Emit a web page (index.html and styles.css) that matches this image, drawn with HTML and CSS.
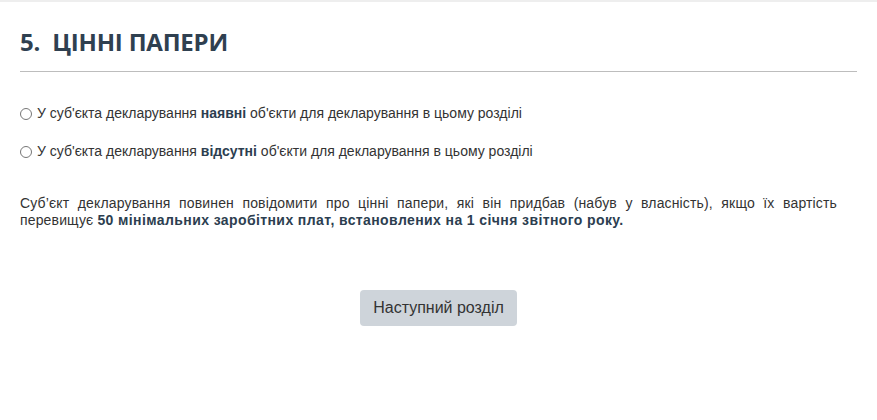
FILE: index.html
```html
<!DOCTYPE html>
<html lang="uk">
<head>
<meta charset="utf-8">
<link rel="stylesheet" href="styles.css">
</head>
<body>
<div class="page">
  <h2 class="title">5.&nbsp; ЦІННІ ПАПЕРИ</h2>
  <hr class="rule">
  <div class="options">
    <label class="option"><input type="radio" name="avail"> <span>У суб'єкта декларування <b>наявні</b> об'єкти для декларування в цьому розділі</span></label>
    <label class="option"><input type="radio" name="avail"> <span>У суб'єкта декларування <b>відсутні</b> об'єкти для декларування в цьому розділі</span></label>
  </div>
  <p class="note">Суб’єкт декларування повинен повідомити про цінні папери, які він придбав (набув у власність), якщо їх вартість перевищує <b>50 мінімальних заробітних плат, встановлених на 1 січня звітного року.</b></p>
  <div class="actions">
    <button class="next" type="button">Наступний розділ</button>
  </div>
</div>
</body>
</html>
```
FILE: styles.css
```css
html, body {
  margin: 0;
  padding: 0;
  background: #fff;
}
body {
  border-top: 2px solid #eeeeee;
  font-family: "Liberation Sans", Arial, sans-serif;
  color: #333;
}
.page {
  padding: 0 20px;
}
.title {
  margin: 0;
  padding-top: 26px;
  font-family: "Open Sans", sans-serif;
  font-weight: 700;
  font-size: 24px;
  line-height: 28px;
  color: #2f4050;
  letter-spacing: -0.2px;
}
.rule {
  margin: 15px 0 0;
  border: 0;
  border-top: 1px solid #bdbdbd;
  height: 0;
}
.options {
  display: flex;
  flex-direction: column;
  gap: 21px;
  padding-top: 33px;
}
.option {
  display: flex;
  align-items: center;
  font-size: 14px;
  line-height: 17px;
  color: #333;
}
.option input {
  margin: 0 5px 0 0;
  width: 12px;
  height: 12px;
}
.option b {
  color: #2c3e50;
}
.note {
  margin: 35px 20px 0 0;
  font-size: 14px;
  line-height: 17px;
  text-align: justify;
  letter-spacing: 0.15px;
  color: #333;
}
.note b {
  color: #2c3e50;
  letter-spacing: 0.4px;
}
.actions {
  display: flex;
  justify-content: center;
  padding-top: 61px;
}
.next {
  font-family: "Liberation Sans", Arial, sans-serif;
  font-size: 16px;
  color: #333;
  background: #ced4da;
  border: 0;
  border-radius: 4px;
  height: 36px;
  padding: 0 13px;
}
```
